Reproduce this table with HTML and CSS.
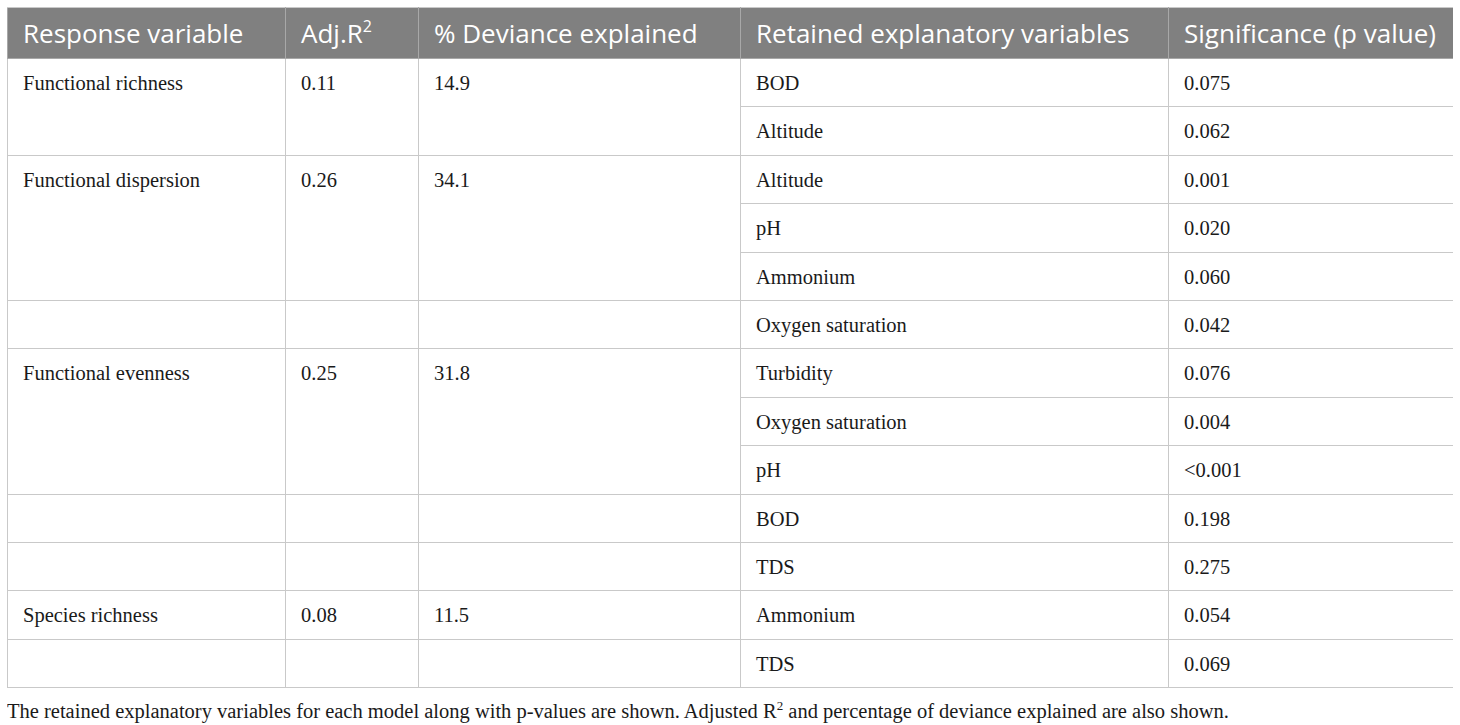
FILE: index.html
```html
<!DOCTYPE html>
<html lang="en">
<head>
  <meta charset="UTF-8">
  <title>Table</title>
  <link rel="stylesheet" href="styles.css">
</head>
<body>
  <table class="results">
    <colgroup>
      <col class="c1"><col class="c2"><col class="c3"><col class="c4"><col class="c5">
    </colgroup>
    <thead>
      <tr>
        <th>Response variable</th>
        <th>Adj.R<sup>2</sup></th>
        <th>% Deviance explained</th>
        <th>Retained explanatory variables</th>
        <th>Significance (p value)</th>
      </tr>
    </thead>
    <tbody>
      <tr>
        <td rowspan="2">Functional richness</td>
        <td rowspan="2">0.11</td>
        <td rowspan="2">14.9</td>
        <td>BOD</td>
        <td>0.075</td>
      </tr>
      <tr><td>Altitude</td><td>0.062</td></tr>
      <tr>
        <td rowspan="3">Functional dispersion</td>
        <td rowspan="3">0.26</td>
        <td rowspan="3">34.1</td>
        <td>Altitude</td>
        <td>0.001</td>
      </tr>
      <tr><td>pH</td><td>0.020</td></tr>
      <tr><td>Ammonium</td><td>0.060</td></tr>
      <tr><td></td><td></td><td></td><td>Oxygen saturation</td><td>0.042</td></tr>
      <tr>
        <td rowspan="3">Functional evenness</td>
        <td rowspan="3">0.25</td>
        <td rowspan="3">31.8</td>
        <td>Turbidity</td>
        <td>0.076</td>
      </tr>
      <tr><td>Oxygen saturation</td><td>0.004</td></tr>
      <tr><td>pH</td><td>&lt;0.001</td></tr>
      <tr><td></td><td></td><td></td><td>BOD</td><td>0.198</td></tr>
      <tr><td></td><td></td><td></td><td>TDS</td><td>0.275</td></tr>
      <tr><td>Species richness</td><td>0.08</td><td>11.5</td><td>Ammonium</td><td>0.054</td></tr>
      <tr><td></td><td></td><td></td><td>TDS</td><td>0.069</td></tr>
    </tbody>
  </table>
  <p class="caption">The retained explanatory variables for each model along with p-values are shown. Adjusted R<sup>2</sup> and percentage of deviance explained are also shown.</p>
</body>
</html>
```

FILE: styles.css
```css
body {
  margin: 7px;
  background: #fff;
  font-family: "Liberation Serif", "Times New Roman", serif;
  color: #1a1a1a;
}

.results {
  width: 1446px;
  border-collapse: collapse;
  table-layout: fixed;
  border: 1px solid #c9c9c9;
}

.c1 { width: 278px; }
.c2 { width: 133px; }
.c3 { width: 322px; }
.c4 { width: 428px; }
.c5 { width: 285px; }

.results th {
  background: #808080;
  color: #fff;
  font-family: "Open Sans", "Noto Sans", sans-serif;
  font-weight: normal;
  font-size: 26px;
  line-height: 32px;
  text-align: left;
  padding: 9px 15px 9px 15px;
  border: 1px solid #a8a8a8;
  border-top-color: #c9c9c9;
  white-space: nowrap;
}

.results th sup {
  font-size: 16px;
  line-height: 0;
  vertical-align: 11px;
}

.results td {
  font-size: 20.5px;
  line-height: 27.4px;
  padding: 11px 15px 9px;
  vertical-align: top;
  border: 1px solid #c9c9c9;
  white-space: nowrap;
}

.caption {
  margin: 11px 0 0;
  font-size: 20.5px;
  line-height: 24px;
  color: #1a1a1a;
  white-space: nowrap;
}

.caption sup {
  font-size: 13px;
  line-height: 0;
}
```
